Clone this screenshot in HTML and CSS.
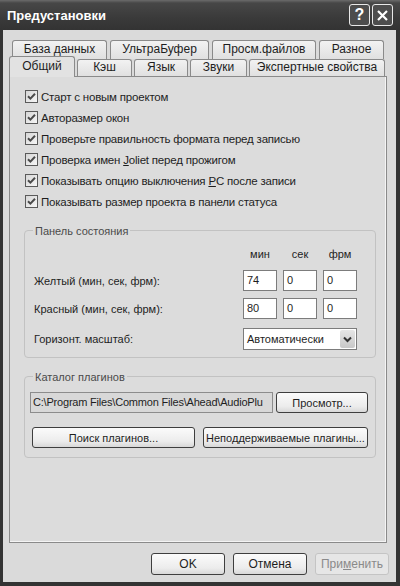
FILE: index.html
```html
<!DOCTYPE html>
<html lang="ru">
<head>
    <meta charset="UTF-8">
    <title>Предустановки</title>
    <link rel="stylesheet" href="styles.css">
</head>
<body>
    <div class="window">
        <div class="titlebar">
            <span class="title">Предустановки</span>
            <div class="caption-btns">
                <span class="cap-btn">?</span>
                <span class="cap-btn">
                    <svg width="13" height="13" viewBox="0 0 13 13"><path d="M2 2 L11 11 M11 2 L2 11" stroke="#fff" stroke-width="2.2" fill="none"/></svg>
                </span>
            </div>
        </div>

        <div class="client">
            <!-- Tabs: back row, then the front row with the active tab -->
            <div class="tab-row back">
                <div class="tab tab-db">База данных</div>
                <div class="tab tab-ultra">УльтраБуфер</div>
                <div class="tab tab-files">Просм.файлов</div>
                <div class="tab tab-misc">Разное</div>
            </div>
            <div class="tab-row front">
                <div class="tab active tab-general">Общий</div>
                <div class="tab tab-cache">Кэш</div>
                <div class="tab tab-lang">Язык</div>
                <div class="tab tab-sound">Звуки</div>
                <div class="tab tab-expert">Экспертные свойства</div>
            </div>

            <div class="panel">
                <ul class="checks">
                    <li><span class="box"><svg width="11" height="11" viewBox="0 0 11 11"><path d="M2 5.2 L4.4 7.6 L9 2.8" stroke="#4a4a4a" stroke-width="2" fill="none"/></svg></span><span>Старт с новым проектом</span></li>
                    <li><span class="box"><svg width="11" height="11" viewBox="0 0 11 11"><path d="M2 5.2 L4.4 7.6 L9 2.8" stroke="#4a4a4a" stroke-width="2" fill="none"/></svg></span><span>Авторазмер окон</span></li>
                    <li><span class="box"><svg width="11" height="11" viewBox="0 0 11 11"><path d="M2 5.2 L4.4 7.6 L9 2.8" stroke="#4a4a4a" stroke-width="2" fill="none"/></svg></span><span>Проверьте правильность формата перед записью</span></li>
                    <li><span class="box"><svg width="11" height="11" viewBox="0 0 11 11"><path d="M2 5.2 L4.4 7.6 L9 2.8" stroke="#4a4a4a" stroke-width="2" fill="none"/></svg></span><span>Проверка имен <u>J</u>oliet перед прожигом</span></li>
                    <li><span class="box"><svg width="11" height="11" viewBox="0 0 11 11"><path d="M2 5.2 L4.4 7.6 L9 2.8" stroke="#4a4a4a" stroke-width="2" fill="none"/></svg></span><span>Показывать опцию выключения <u>P</u>C после записи</span></li>
                    <li><span class="box"><svg width="11" height="11" viewBox="0 0 11 11"><path d="M2 5.2 L4.4 7.6 L9 2.8" stroke="#4a4a4a" stroke-width="2" fill="none"/></svg></span><span>Показывать размер проекта в панели статуса</span></li>
                </ul>

                <div class="group status">
                    <div class="group-title">Панель состояния</div>
                    <div class="row heads">
                        <span class="label"></span>
                        <span class="col">мин</span>
                        <span class="col">сек</span>
                        <span class="col">фрм</span>
                    </div>
                    <div class="row">
                        <span class="label">Желтый (мин, сек, фрм):</span>
                        <span class="num">74</span>
                        <span class="num">0</span>
                        <span class="num">0</span>
                    </div>
                    <div class="row">
                        <span class="label">Красный (мин, сек, фрм):</span>
                        <span class="num">80</span>
                        <span class="num">0</span>
                        <span class="num">0</span>
                    </div>
                    <div class="row scale">
                        <span class="label">Горизонт. масштаб:</span>
                        <div class="combo">
                            <span class="combo-text">Автоматически</span>
                            <span class="combo-arrow">
                                <svg width="9" height="7" viewBox="0 0 9 7"><path d="M1 1.5 L4.5 5 L8 1.5" stroke="#333" stroke-width="2" fill="none"/></svg>
                            </span>
                        </div>
                    </div>
                </div>

                <div class="group plugins">
                    <div class="group-title">Каталог плагинов</div>
                    <div class="path-row">
                        <span class="path">C:\Program Files\Common Files\Ahead\AudioPlu</span>
                        <button class="btn browse">Просмотр...</button>
                    </div>
                    <div class="plugin-btns">
                        <button class="btn find">Поиск плагинов...</button>
                        <button class="btn unsupported">Неподдерживаемые плагины...</button>
                    </div>
                </div>
            </div>

            <div class="footer">
                <button class="btn dlg">OK</button>
                <button class="btn dlg">Отмена</button>
                <button class="btn dlg disabled">При<u>м</u>енить</button>
            </div>
        </div>
    </div>
</body>
</html>
```

FILE: styles.css
```css
* {
    box-sizing: border-box;
}
body {
    margin: 0;
    font-family: "Liberation Sans", Arial, sans-serif;
    font-size: 11px;
    color: #1e1e1e;
    background: #333;
}
.window {
    width: 400px;
    height: 586px;
    display: flex;
    flex-direction: column;
    background: #333;
}

/* title bar */
.titlebar {
    height: 30px;
    display: flex;
    align-items: center;
    padding: 0 7px 0 7px;
    background: linear-gradient(#6b6b6b 0, #474747 3px, #3a3a3a 60%, #333 100%);
}
.title {
    color: #fff;
    font-weight: bold;
    font-size: 13px;
}
.caption-btns {
    margin-left: auto;
    display: flex;
    gap: 2px;
}
.cap-btn {
    width: 21px;
    height: 22px;
    border: 1px solid #e8e8e8;
    border-radius: 3px;
    background: #4d4d4d;
    color: #fff;
    font-weight: bold;
    font-size: 16px;
    display: flex;
    align-items: center;
    justify-content: center;
}

/* client area */
.client {
    flex: 1;
    margin: 0 4px 4px 3px;
    background: #dadada;
    padding-top: 10px;
}
.tab-row {
    display: flex;
}
.tab-row.back {
    height: 19px;
    padding-left: 9px;
    gap: 3px;
}
.tab-row.front {
    height: 20px;
    margin-top: -3px;
    padding-left: 6px;
    gap: 2px;
}
.tab {
    border: 1px solid #8a8a8a;
    border-bottom: none;
    border-radius: 3px 3px 0 0;
    background: linear-gradient(#f2f2f2, #e0e0e0);
    text-align: center;
    font-size: 12px;
    line-height: 16px;
    height: 19px;
}
.front .tab {
    margin-top: 3px;
    height: 17px;
    line-height: 15px;
}
.front .tab.active {
    margin-top: 0;
    height: 21px;
    line-height: 19px;
    background: #e2e2e2;
    position: relative;
    z-index: 1;
}
.tab-db { width: 95px; }
.tab-ultra { width: 99px; }
.tab-files { width: 104px; }
.tab-misc { width: 65px; }
.tab-general { width: 66px; }
.tab-cache { width: 55px; }
.tab-lang { width: 54px; }
.tab-sound { width: 57px; }
.tab-expert { width: 136px; }

.panel {
    margin-left: 6px;
    width: 378px;
    height: 467px;
    border: 1px solid #8a8a8a;
    box-shadow: inset -1px -1px 0 #f4f4f4;
    background: #dcdcdc;
}

/* check boxes */
.checks {
    list-style: none;
    margin: 0;
    padding: 9px 0 0 15px;
    font-size: 11.5px;
    letter-spacing: -0.2px;
}
.checks li {
    height: 21px;
    display: flex;
    align-items: center;
}
.box {
    width: 13px;
    height: 13px;
    border: 1px solid #5a5a5a;
    background: linear-gradient(135deg, #d6d6d6, #f6f6f6);
    margin-right: 3px;
    display: flex;
    align-items: center;
    justify-content: center;
}

/* group boxes */
.group {
    margin-left: 14px;
    width: 352px;
    border: 1px solid #c2c2c2;
    border-radius: 4px;
}
.group.status {
    margin-top: 18px;
    height: 128px;
    padding: 0 0 0 9px;
}
.group.plugins {
    margin-top: 18px;
    height: 82px;
    padding: 0 0 0 5px;
}
.group-title {
    display: table;
    margin: -7px 0 0 -1px;
    padding: 0 2px;
    line-height: 14px;
    background: #dcdcdc;
    color: #4a4a4a;
}
.plugins .group-title {
    margin-left: 3px;
}
.row {
    display: flex;
    align-items: center;
    height: 21px;
    margin-top: 7px;
}
.row.heads {
    height: 14px;
    margin-top: 9px;
}
.row:nth-child(3) {
    margin-top: 9px;
}
.row.scale {
    height: 22px;
    margin-top: 9px;
}
.label {
    flex: 1;
}
.col {
    width: 34px;
    margin-left: 6px;
    text-align: center;
}
.num {
    width: 34px;
    height: 21px;
    margin-left: 6px;
    border: 1px solid #7c7c7c;
    background: #fff;
    padding-left: 3px;
    line-height: 19px;
}
.num:last-child,
.row .col:last-child {
    margin-right: 18px;
}
.combo {
    width: 114px;
    margin-right: 18px;
    height: 22px;
    border: 1px solid #7c7c7c;
    background: #fff;
    display: flex;
    align-items: center;
    padding: 1px;
}
.combo-text {
    flex: 1;
    padding-left: 2px;
}
.combo-arrow {
    width: 15px;
    height: 18px;
    background: linear-gradient(#e6e6e6, #c8c8c8);
    border-radius: 2px;
    display: flex;
    align-items: center;
    justify-content: center;
}

/* plugin folder */
.path-row {
    display: flex;
    margin-top: 8px;
    gap: 3px;
}
.path {
    width: 243px;
    height: 21px;
    border: 1px solid #8c8c8c;
    background: #d8d8d8;
    padding-left: 2px;
    line-height: 19px;
    letter-spacing: -0.2px;
    white-space: nowrap;
    overflow: hidden;
}
.plugin-btns {
    display: flex;
    margin-top: 14px;
    padding-left: 2px;
    gap: 8px;
}

/* buttons */
.btn {
    font-family: "Liberation Sans", Arial, sans-serif;
    font-size: 11px;
    color: #1e1e1e;
    height: 21px;
    padding: 0;
    white-space: nowrap;
    border: 1px solid #3e3e3e;
    border-radius: 3px;
    background: linear-gradient(#fbfbfb, #ececec 70%, #d8d8d8);
}
.browse { width: 92px; }
.find { width: 163px; }
.unsupported { width: 165px; }

.footer {
    display: flex;
    justify-content: flex-end;
    gap: 8px;
    margin-top: 10px;
    padding-right: 7px;
}
.btn.dlg {
    width: 74px;
    height: 22px;
    font-size: 12px;
}
.btn.disabled {
    border-color: #c4c4c4;
    color: #8a8a8a;
    background: #e6e6e6;
}
```
